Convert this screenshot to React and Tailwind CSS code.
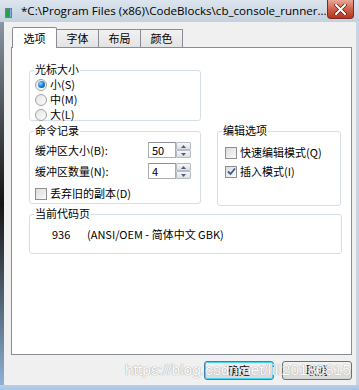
import React from 'react';

const FONT = { fontFamily: '"Noto Sans CJK SC", "Liberation Sans", sans-serif' };

const Group = ({ title, className, children }) => (
  <div className={`relative border border-[#d5dfe5] rounded-[3px] ${className}`}>
    <span className="absolute -top-[8px] left-[4px] bg-white px-[1px] text-[11px] leading-[13px] text-black">
      {title}
    </span>
    {children}
  </div>
);

const Radio = ({ checked, label }) => (
  <div className="flex items-center h-[15px] gap-[3px]">
    <span className="w-[12px] h-[12px] rounded-full border border-[#a2a2a2] bg-gradient-to-br from-[#e6e6e6] to-[#fbfbfb] flex items-center justify-center">
      {checked && (
        <span className="w-[7px] h-[7px] rounded-full bg-[radial-gradient(circle_at_35%_35%,#8ed3ff,#1b7fd6_50%,#0c3f8c)]" />
      )}
    </span>
    <span className="text-[11px] leading-[15px]">{label}</span>
  </div>
);

const Check = ({ checked, label }) => (
  <div className="flex items-center h-[15px] gap-[3px]">
    <span className="w-[12px] h-[12px] border border-[#8f8f8f] bg-gradient-to-br from-[#dcdcdc] to-[#fafafa] flex items-center justify-center">
      {checked && (
        <svg width="9" height="9" viewBox="0 0 9 9">
          <path d="M1 4.5 L3.5 7 L8 1.5" fill="none" stroke="#3b57a0" strokeWidth="1.8" />
        </svg>
      )}
    </span>
    <span className="text-[11px] leading-[15px]">{label}</span>
  </div>
);

const Spin = ({ value }) => (
  <div className="flex h-[16px]">
    <div className="w-[28px] h-[16px] border border-[#abadb3] border-t-[#8e9199] text-[11px] leading-[14px] pl-[3px] bg-white">
      {value}
    </div>
    <div className="w-[15px] h-[16px] flex flex-col">
      {[0, 1].map((i) => (
        <div
          key={i}
          className="flex-1 border border-[#b6bcc6] rounded-[1px] bg-gradient-to-b from-[#f7f7f7] to-[#dedede] flex items-center justify-center"
        >
          <svg width="5" height="3" viewBox="0 0 5 3">
            <path d={i === 0 ? 'M0 3 L2.5 0 L5 3 Z' : 'M0 0 L2.5 3 L5 0 Z'} fill="#4a6087" />
          </svg>
        </div>
      ))}
    </div>
  </div>
);

const Tab = ({ label, active }) =>
  active ? (
    <div className="relative z-10 w-[45px] h-[21px] bg-white border border-b-0 border-[#898c95] rounded-t-[2px] flex items-center justify-center text-[11px]">
      {label}
    </div>
  ) : (
    <div className="w-[43px] h-[18px] mb-[1px] -ml-[1px] border border-b-0 border-[#898c95] bg-gradient-to-b from-[#f2f2f2] to-[#e3e3e3] flex items-center justify-center text-[11px]">
      {label}
    </div>
  );

const Button = ({ label, primary }) => (
  <div
    className={`w-[70px] h-[19px] rounded-[3px] flex items-center justify-center text-[11px] bg-gradient-to-b from-[#f2f2f2] via-[#ebebeb] to-[#d6d6d6] ${
      primary ? 'border border-[#3c7fb1] shadow-[inset_0_0_0_1px_#48d4f5]' : 'border border-[#707070]'
    }`}
  >
    {label}
  </div>
);

export default function App() {
  return (
    <div className="relative w-[359px] h-[390px] overflow-hidden flex flex-col bg-[#c9d5e2] text-black" style={FONT}>
      {/* title bar */}
      <div className="h-[22px] flex items-start bg-gradient-to-b from-[#dce5ee] to-[#c4d1de]">
        <div className="w-[10px] h-[10px] mt-[8px] ml-[5px] border border-[#6d7f93] bg-white flex">
          <span className="w-[4px] h-full bg-[#2aa04a]" />
          <span className="flex-1 bg-[#7fb3e8]" />
        </div>
        <span
          className="ml-[9px] mt-[3px] text-[11.6px] leading-[16px] text-black whitespace-nowrap"
          style={{ fontFamily: '"Open Sans", "Liberation Sans", sans-serif' }}
        >
          *C:\Program Files (x86)\CodeBlocks\cb_console_runner...
        </span>
        <div className="ml-auto mr-[5px] w-[43px] h-[19px] rounded-b-[4px] border border-[#7a2a20] border-t-0 bg-gradient-to-b from-[#e8a898] via-[#d0614b] to-[#b8331c] flex items-center justify-center">
          <svg width="13" height="11" viewBox="0 0 13 11">
            <path d="M2 1 L11 10 M11 1 L2 10" stroke="#5a1a10" strokeWidth="3.4" strokeLinecap="round" />
            <path d="M2 1 L11 10 M11 1 L2 10" stroke="#ffffff" strokeWidth="2" strokeLinecap="round" />
          </svg>
        </div>
      </div>

      <div className="flex flex-1">
        {/* left frame */}
        <div className="w-[4px] bg-gradient-to-b from-[#8a96a3] via-[#151515] to-[#8fb2d6]" />

        {/* client area */}
        <div className="w-[352px] bg-[#f0f0f0] pt-[5px] pl-[7px] flex flex-col">
          <div className="flex items-end h-[21px] pl-[1px]">
            <Tab label="选项" active />
            <Tab label="字体" />
            <Tab label="布局" />
            <Tab label="颜色" />
          </div>

          <div className="-mt-[1px] w-[341px] h-[308px] bg-white border border-[#898c95] pl-[17px] pt-[22px] flex flex-col">
            <Group title="光标大小" className="w-[172px] h-[51px] pl-[5px] pt-[6px]">
              <Radio checked label="小(S)" />
              <Radio label="中(M)" />
              <Radio label="大(L)" />
            </Group>

            <div className="flex items-start mt-[10px]">
              <Group title="命令记录" className="w-[172px] h-[73px] pl-[5px] pt-[10px]">
                <div className="flex items-center justify-between pr-[9px] h-[16px]">
                  <span className="text-[11px]">缓冲区大小(B):</span>
                  <Spin value="50" />
                </div>
                <div className="flex items-center justify-between pr-[9px] h-[16px] mt-[5px]">
                  <span className="text-[11px]">缓冲区数量(N):</span>
                  <Spin value="4" />
                </div>
                <div className="mt-[7px]">
                  <Check label="丢弃旧的副本(D)" />
                </div>
              </Group>
              <Group title="编辑选项" className="ml-[16px] w-[124px] h-[75px] pl-[7px] pt-[13px]">
                <Check label="快速编辑模式(Q)" />
                <div className="mt-[4px]">
                  <Check checked label="插入模式(I)" />
                </div>
              </Group>
            </div>

            <Group title="当前代码页" className="mt-[8px] w-[313px] h-[40px] pl-[22px] pt-[12px]">
              <div className="flex text-[11px] leading-[15px]">
                <span className="w-[35px]">936</span>
                <span>(ANSI/OEM - 简体中文 GBK)</span>
              </div>
            </Group>
          </div>

          <div className="flex justify-end gap-[8px] pr-[4px] mt-[6px]">
            <Button label="确定" primary />
            <Button label="取消" />
          </div>
        </div>

        {/* right frame */}
        <div className="w-[3px] bg-[#c9d5e2]" />
      </div>

      {/* bottom frame */}
      <div className="h-[5px] bg-gradient-to-b from-[#b9d1ea] to-[#a6c4e4]" />

      {/* watermark */}
      <div
        className="absolute left-[125px] top-[360px] text-[15.5px] leading-[20px] text-white whitespace-nowrap [text-shadow:0_0_1px_#9a9a9a,0_0_1px_#9a9a9a] opacity-90"
        style={{ fontFamily: '"Liberation Sans", Arial, sans-serif' }}
      >
        https://blog.csdn.net/lili20180815
      </div>
    </div>
  );
}
